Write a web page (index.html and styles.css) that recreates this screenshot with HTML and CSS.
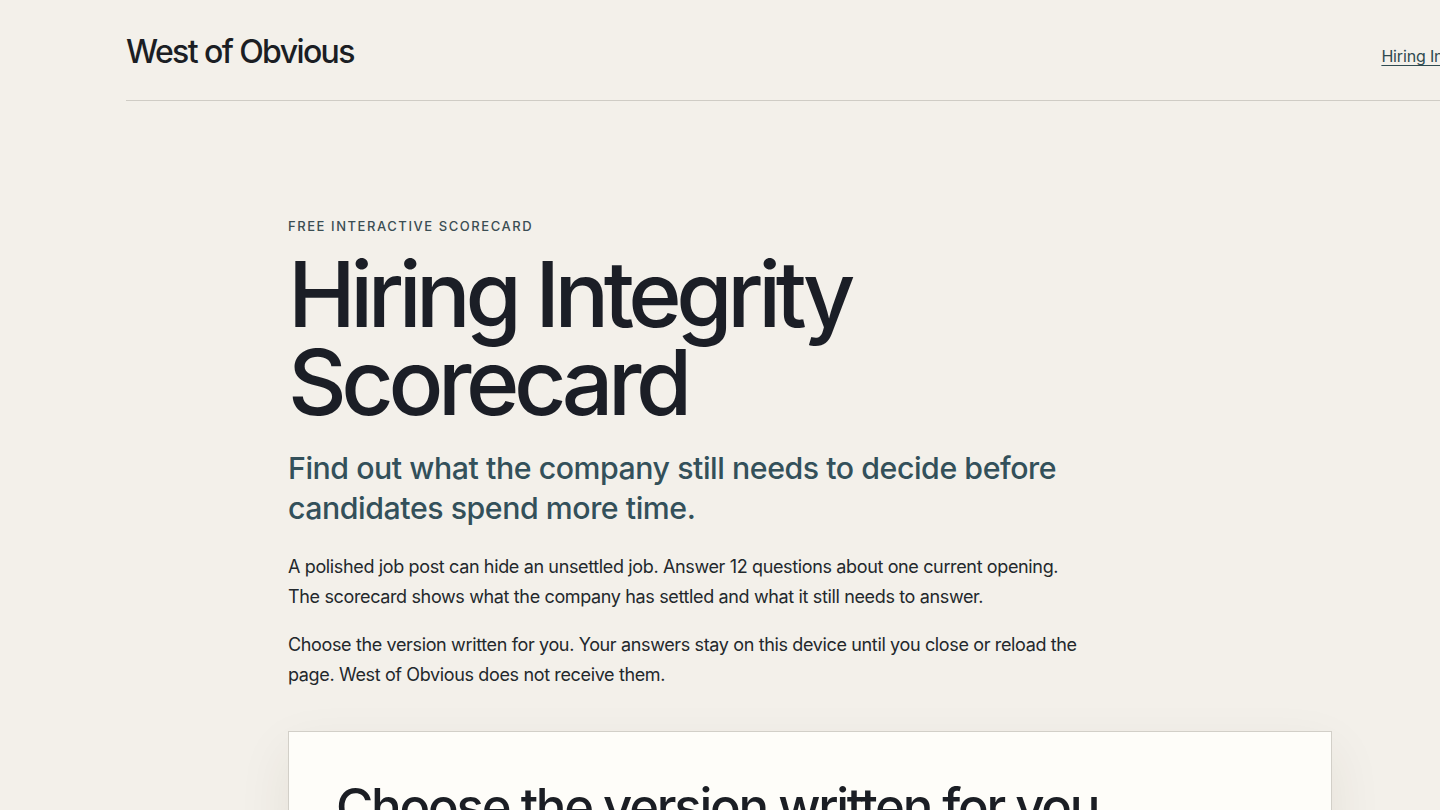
FILE: index.html
```html
<!DOCTYPE html>
<html lang="en">
<head>
<meta charset="utf-8">
<title>Hiring Integrity Scorecard — West of Obvious</title>
<link rel="stylesheet" href="styles.css">
</head>
<body>
<header class="site-header">
  <a class="brand" href="#">West of Obvious</a>
  <nav class="nav"><a href="#">Hiring Integrity Scorecard</a></nav>
</header>
<main class="main">
  <section class="intro">
    <p class="eyebrow">FREE INTERACTIVE SCORECARD</p>
    <h1 class="title">Hiring Integrity Scorecard</h1>
    <p class="lede">Find out what the company still needs to decide before candidates spend more time.</p>
    <p class="body">A polished job post can hide an unsettled job. Answer 12 questions about one current opening. The scorecard shows what the company has settled and what it still needs to answer.</p>
    <p class="body">Choose the version written for you. Your answers stay on this device until you close or reload the page. West of Obvious does not receive them.</p>
  </section>
  <section class="card">
    <h2 class="card-title">Choose the version written for you</h2>
  </section>
</main>
</body>
</html>
```

FILE: styles.css
```css
html, body { margin: 0; padding: 0; }
body {
  background: #f3f0ea;
  color: #1b1e24;
  font-family: Inter, "Noto Sans", sans-serif;
  overflow-x: hidden;
  width: 1440px;
}
a { color: inherit; }
.site-header {
  display: flex;
  justify-content: space-between;
  align-items: center;
  margin-left: 126px;
  width: 1446px;
  height: 100px;
  border-bottom: 1px solid #cfccc5;
}
.brand {
  font-size: 32px;
  font-weight: 500;
  letter-spacing: -0.05em;
  text-decoration: none;
  color: #1b1e24;
  margin-top: 2px;
}
.nav a {
  font-size: 16px;
  color: #2f4a50;
  text-decoration: underline;
  text-underline-offset: 3px;
  letter-spacing: -0.01em;
  white-space: nowrap;
  margin-top: 12px;
  display: inline-block;
}
.main {
  padding: 117px 108px 0 288px;
}
.eyebrow {
  margin: 0;
  font-size: 13px;
  font-weight: 500;
  letter-spacing: 0.12em;
  color: #3b4d53;
}
.title {
  margin: 16px 0 0;
  font-size: 91px;
  line-height: 88px;
  font-weight: 500;
  letter-spacing: -0.06em;
  color: #1b1e26;
  width: 620px;
}
.lede {
  margin: 22px 0 0;
  font-size: 30.3px;
  line-height: 40px;
  font-weight: 500;
  letter-spacing: -0.015em;
  color: #33505a;
  max-width: 800px;
}
.body {
  margin: 24px 0 0;
  font-size: 18px;
  line-height: 30px;
  color: #23282c;
  letter-spacing: -0.02em;
  max-width: 800px;
}
.body + .body { margin-top: 18px; }
.card {
  margin-top: 41px;
  background: #fefdf9;
  border: 1px solid #d2cfc8;
  box-shadow: 0 20px 50px rgba(60, 50, 30, 0.08);
  padding: 44px 47px;
  min-height: 300px;
}
.card-title {
  margin: 0;
  font-size: 51px;
  font-weight: 500;
  letter-spacing: -0.045em;
  color: #1b1e24;
}
```
